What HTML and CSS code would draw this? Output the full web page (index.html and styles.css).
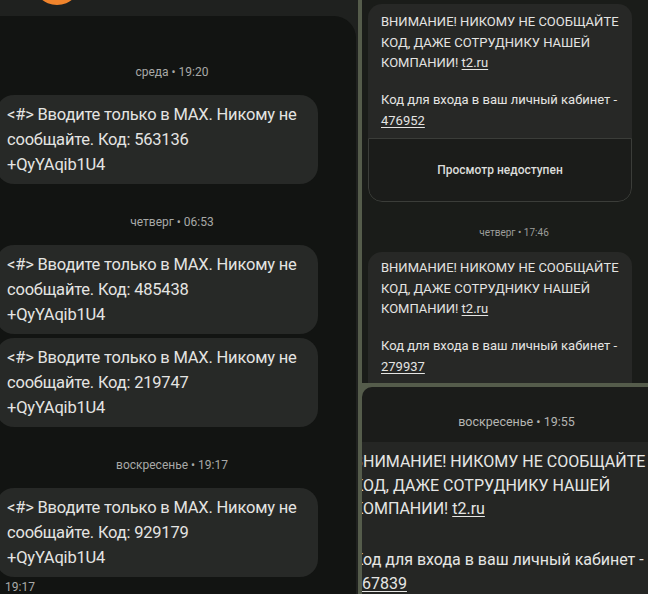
FILE: index.html
```html
<!DOCTYPE html>
<html lang="ru">
<head>
<meta charset="utf-8">
<title>SMS</title>
<link rel="stylesheet" href="styles.css">
</head>
<body>
<div class="collage">
  <section class="left">
    <div class="top-strip"><div class="avatar"></div></div>
    <div class="thread">
      <div class="date">среда • 19:20</div>
      <div class="bubble">&lt;#&gt; Вводите только в MAX. Никому не<br>сообщайте. Код: 563136<br>+QyYAqib1U4</div>
      <div class="date">четверг • 06:53</div>
      <div class="bubble">&lt;#&gt; Вводите только в MAX. Никому не<br>сообщайте. Код: 485438<br>+QyYAqib1U4</div>
      <div class="bubble">&lt;#&gt; Вводите только в MAX. Никому не<br>сообщайте. Код: 219747<br>+QyYAqib1U4</div>
      <div class="date">воскресенье • 19:17</div>
      <div class="bubble">&lt;#&gt; Вводите только в MAX. Никому не<br>сообщайте. Код: 929179<br>+QyYAqib1U4</div>
      <div class="stamp">19:17</div>
    </div>
  </section>
  <div class="right">
    <section class="panel-a">
      <div class="card">
        <div class="msg">
          <p>ВНИМАНИЕ! НИКОМУ НЕ СООБЩАЙТЕ<br>КОД, ДАЖЕ СОТРУДНИКУ НАШЕЙ<br>КОМПАНИИ! <u>t2.ru</u></p>
          <p>Код для входа в ваш личный кабинет -<br><u>476952</u></p>
        </div>
        <div class="preview">Просмотр недоступен</div>
      </div>
      <div class="date-small">четверг • 17:46</div>
      <div class="card card-2">
        <div class="msg">
          <p>ВНИМАНИЕ! НИКОМУ НЕ СООБЩАЙТЕ<br>КОД, ДАЖЕ СОТРУДНИКУ НАШЕЙ<br>КОМПАНИИ! <u>t2.ru</u></p>
          <p>Код для входа в ваш личный кабинет -<br><u>279937</u></p>
        </div>
      </div>
    </section>
    <section class="panel-b">
      <div class="date-b">воскресенье • 19:55</div>
      <div class="big-bubble">
        <p>ВНИМАНИЕ! НИКОМУ НЕ СООБЩАЙТЕ<br>КОД, ДАЖЕ СОТРУДНИКУ НАШЕЙ<br>КОМПАНИИ! <u>t2.ru</u></p>
        <p>Код для входа в ваш личный кабинет -<br><u>567839</u></p>
      </div>
    </section>
  </div>
</div>
</body>
</html>
```
FILE: styles.css
```css
html, body {
  margin: 0;
  padding: 0;
}
body {
  width: 648px;
  height: 594px;
  overflow: hidden;
  background: #555c4b;
  font-family: Roboto, "Noto Sans", "Liberation Sans", sans-serif;
  color: #e7e7e5;
}
.collage {
  display: grid;
  grid-template-columns: 358px 286px;
  gap: 4px;
  height: 594px;
}
.left {
  background: #1f211f;
  overflow: hidden;
  display: flex;
  flex-direction: column;
}
.top-strip {
  height: 16px;
  padding-left: 33px;
  flex: none;
}
.avatar {
  width: 48px;
  height: 48px;
  margin-top: -43px;
  border-radius: 50%;
  background: #f0842c;
}
.thread {
  flex: 1;
  margin-right: 2px;
  background: #121412;
  border-top-right-radius: 22px;
  padding: 18px 12px 0 0;
  overflow: hidden;
}
.date {
  margin: 30px 0 15px;
  text-align: center;
  font-size: 12px;
  line-height: 16px;
  color: #a8a9a7;
}
.bubble {
  width: 301px;
  margin-left: -4px;
  padding: 7px 10px 7px 11px;
  border-radius: 18px;
  background: #272927;
  font-size: 16.5px;
  letter-spacing: -0.2px;
  line-height: 25px;
  white-space: nowrap;
  color: #e4e4e2;
}
.bubble + .bubble {
  margin-top: 4px;
}
.stamp {
  margin: 3px 0 0 5px;
  font-size: 12px;
  line-height: 15px;
  color: #a9aaa8;
}
.right {
  display: grid;
  grid-template-rows: 383px 1fr;
  gap: 4px;
  min-height: 0;
}
.panel-a {
  background: #1a1c19;
  padding: 4px 16px 0 6px;
  overflow: hidden;
}
.card {
  border-radius: 14px;
  overflow: hidden;
}
.msg {
  background: #272826;
  padding: 8px 13px 7px;
  font-size: 13px;
  line-height: 20.5px;
  white-space: nowrap;
  color: #e4e4e2;
}
.msg p {
  margin: 0;
}
.msg p + p {
  margin-top: 16.5px;
}
u {
  text-decoration-thickness: 1px;
  text-underline-offset: 2px;
}
.preview {
  height: 62px;
  display: flex;
  align-items: center;
  justify-content: center;
  background: #1b1c1a;
  border: 1px solid #3b3d39;
  border-radius: 0 0 14px 14px;
  font-size: 12px;
  font-weight: 500;
  color: #dcdcda;
}
.date-small {
  margin: 24px 0 12px;
  padding-left: 28px;
  text-align: center;
  font-size: 10px;
  line-height: 14px;
  color: #9c9d9a;
}
.card-2 .msg {
  padding-top: 6px;
  padding-bottom: 20px;
}
.panel-b {
  background: #1b1c1a;
  border-top-left-radius: 10px;
  overflow: hidden;
  padding-top: 27px;
}
.date-b {
  padding-left: 23px;
  text-align: center;
  font-size: 12.5px;
  line-height: 16px;
  color: #b4b5b2;
  margin-bottom: 12px;
}
.big-bubble {
  margin-left: -9px;
  padding: 8px 0 20px;
  background: #252624;
  font-size: 16px;
  line-height: 23.5px;
  white-space: nowrap;
  color: #e6e6e4;
}
.big-bubble p {
  margin: 0;
}
.big-bubble p + p {
  margin-top: 27.5px;
}
```
